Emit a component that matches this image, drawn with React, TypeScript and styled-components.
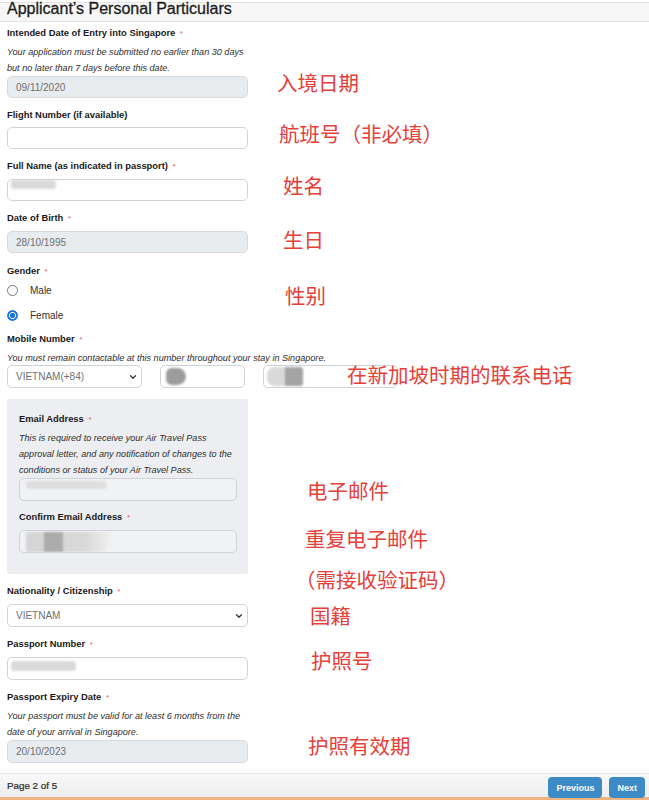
import styled, { createGlobalStyle } from 'styled-components';
import { ChevronDown } from 'lucide-react';

const GlobalStyle = createGlobalStyle`
  html, body {
    margin: 0;
    padding: 0;
    background: #fff;
  }
  body {
    font-family: 'Liberation Sans', Arial, sans-serif;
    color: #212529;
  }
`;

type Note = { text: string; top: number; left: number };

const notes: Note[] = [
  { text: '入境日期', top: 71, left: 277 },
  { text: '航班号（非必填）', top: 122, left: 279 },
  { text: '姓名', top: 174, left: 283 },
  { text: '生日', top: 228, left: 283 },
  { text: '性别', top: 284, left: 285 },
  { text: '在新加坡时期的联系电话', top: 363, left: 347 },
  { text: '电子邮件', top: 479, left: 307 },
  { text: '重复电子邮件', top: 527, left: 305 },
  { text: '（需接收验证码）', top: 568, left: 295 },
  { text: '国籍', top: 604, left: 310 },
  { text: '护照号', top: 649, left: 311 },
  { text: '护照有效期', top: 734, left: 308 },
];

function Req() {
  return <Star>*</Star>;
}

export default function App() {
  return (
    <>
      <GlobalStyle />
      <Page>
        <Header>
          <Title>Applicant’s Personal Particulars</Title>
        </Header>

        <Form>
          <Label $gap={5}>
            Intended Date of Entry into Singapore <Req />
          </Label>
          <Help>
            Your application must be submitted no earlier than 30 days
            <br />
            but no later than 7 days before this date.
          </Help>
          <Field $disabled>09/11/2020</Field>

          <Label>Flight Number (if available)</Label>
          <Field />

          <Label>
            Full Name (as indicated in passport) <Req />
          </Label>
          <Field>
            <Blob $w={45} $h={9} $ml={-5} $mt={-12} $tone="#d9d9d9" />
          </Field>

          <Label>
            Date of Birth <Req />
          </Label>
          <Field $disabled>28/10/1995</Field>

          <Label $gap={12}>
            Gender <Req />
          </Label>
          <Options>
            <Option>
              <Radio />
              Male
            </Option>
            <Option>
              <Radio $checked />
              Female
            </Option>
          </Options>

          <Label $gap={5}>
            Mobile Number <Req />
          </Label>
          <Help $nowrap>You must remain contactable at this number throughout your stay in Singapore.</Help>
          <PhoneRow>
            <Field $w={135} $h={23}>
              VIETNAM(+84)
              <Chevron size={10} strokeWidth={3} />
            </Field>
            <Field $w={85} $h={23}>
              <Blob $w={20} $h={17} $ml={-3} $tone="#9c9c9c" $radius="6px 9px 9px 6px" />
            </Field>
            <Field $w={135} $h={23}>
              <Blob
                $w={36}
                $h={19}
                $ml={-5}
                $tone="linear-gradient(90deg, #d9d9d9 0 50%, #a4a4a4 50% 100%)"
                $radius="8px 3px 3px 8px"
              />
            </Field>
          </PhoneRow>

          <EmailBox>
            <Label $gap={5}>
              Email Address <Req />
            </Label>
            <Help>
              This is required to receive your Air Travel Pass
              <br />
              approval letter, and any notification of changes to the
              <br />
              conditions or status of your Air Travel Pass.
            </Help>
            <Field $muted $h={23}>
              <Blob $w={80} $h={8} $ml={-2} $mt={-10} $tone="#dedede" />
            </Field>

            <Label $gap={10}>
              Confirm Email Address <Req />
            </Label>
            <Field $muted $h={23}>
              <Blob
                $w={84}
                $h={20}
                $ml={-2}
                $tone="linear-gradient(90deg, #d5d5d5 0 22%, #ababab 22% 44%, #d8d8d8 44% 70%, #efefef 100%)"
                $radius="2px 2px 10px 2px"
              />
            </Field>
          </EmailBox>

          <Label>
            Nationality / Citizenship <Req />
          </Label>
          <Field $h={23}>
            VIETNAM
            <Chevron size={10} strokeWidth={3} />
          </Field>

          <Label>
            Passport Number <Req />
          </Label>
          <Field $h={23}>
            <Blob $w={65} $h={10} $ml={-5} $mt={-6} $tone="#dadada" />
          </Field>

          <Label>
            Passport Expiry Date <Req />
          </Label>
          <Help>
            Your passport must be valid for at least 6 months from the
            <br />
            date of your arrival in Singapore.
          </Help>
          <Field $disabled $h={23}>
            20/10/2023
          </Field>
        </Form>

        <Footer>
          <PageInfo>Page 2 of 5</PageInfo>
          <Buttons>
            <NavButton>Previous</NavButton>
            <NavButton>Next</NavButton>
          </Buttons>
        </Footer>

        {notes.map((n) => (
          <Annotation key={n.text} $top={n.top} $left={n.left}>
            {n.text}
          </Annotation>
        ))}
      </Page>
    </>
  );
}

const Page = styled.div`
  position: relative;
  width: 649px;
  height: 800px;
  overflow: hidden;
  display: flex;
  flex-direction: column;
  background: #fff;
`;

const Header = styled.div`
  flex-shrink: 0;
  margin-top: 2px;
  height: 18px;
  padding-left: 7px;
  border-top: 1px solid #e3e3e3;
  border-bottom: 1px solid #e3e3e3;
  background: #f7f7f7;
`;

const Title = styled.h1`
  margin: -3px 0 0;
  font-size: 16px;
  line-height: 18px;
  font-weight: 400;
  color: #1d1d1d;
  -webkit-text-stroke: 0.3px #1d1d1d;
  white-space: nowrap;
`;

const Form = styled.div`
  flex: 1;
  min-height: 0;
  width: 241px;
  padding: 0 7px;
  display: flex;
  flex-direction: column;
`;

const Label = styled.div<{ $gap?: number }>`
  margin-top: ${({ $gap }) => $gap ?? 11}px;
  margin-bottom: 6px;
  font-size: 9.4px;
  line-height: 12px;
  font-weight: 700;
  color: #1a1a1a;
  white-space: nowrap;
`;

const Star = styled.span`
  margin-left: 2px;
  font-size: 8px;
  font-weight: 400;
  color: #e0626b;
`;

const Help = styled.div<{ $nowrap?: boolean }>`
  margin-top: -2px;
  font-size: 9.1px;
  line-height: 16px;
  font-style: italic;
  color: #2e2e2e;
  white-space: ${({ $nowrap }) => ($nowrap ? 'nowrap' : 'normal')};
`;

const Field = styled.div<{ $disabled?: boolean; $muted?: boolean; $w?: number; $h?: number }>`
  box-sizing: border-box;
  flex-shrink: 0;
  width: ${({ $w }) => ($w ? `${$w}px` : '100%')};
  height: ${({ $h }) => $h ?? 22}px;
  padding: 0 8px;
  display: flex;
  align-items: center;
  overflow: hidden;
  border: 1px solid ${({ $disabled }) => ($disabled ? '#d6d9dd' : '#cfd2d6')};
  border-radius: 5px;
  background: ${({ $disabled, $muted }) => ($disabled ? '#e9ecef' : $muted ? '#f1f2f4' : '#fff')};
  font-size: 10px;
  color: #6c7075;
`;

const Chevron = styled(ChevronDown)`
  margin-left: auto;
  margin-right: -5px;
  color: #333;
`;

const Blob = styled.span<{ $w: number; $h: number; $ml?: number; $mt?: number; $tone: string; $radius?: string }>`
  flex-shrink: 0;
  width: ${({ $w }) => $w}px;
  height: ${({ $h }) => $h}px;
  margin-left: ${({ $ml }) => $ml ?? 0}px;
  margin-top: ${({ $mt }) => $mt ?? 0}px;
  border-radius: ${({ $radius }) => $radius ?? '3px'};
  background: ${({ $tone }) => $tone};
  filter: blur(1px);
`;

const Options = styled.div`
  margin-top: -6px;
  display: flex;
  flex-direction: column;
`;

const Option = styled.label`
  height: 25px;
  display: flex;
  align-items: center;
  gap: 12px;
  font-size: 10px;
  color: #333;
`;

const Radio = styled.span<{ $checked?: boolean }>`
  box-sizing: border-box;
  width: 11px;
  height: 11px;
  border-radius: 50%;
  border: 1px solid ${({ $checked }) => ($checked ? '#1a73e8' : '#7a7a7a')};
  background: ${({ $checked }) =>
    $checked ? 'radial-gradient(circle, #1a73e8 0 2.4px, #fff 2.9px 3.2px, #1a73e8 3.7px)' : '#fff'};
`;

const PhoneRow = styled.div`
  margin-top: -1px;
  display: flex;
  gap: 18px;
  width: 400px;
`;

const EmailBox = styled.div`
  margin-top: 11px;
  padding: 9px 11px 21px 12px;
  border-radius: 2px;
  background: #eceef1;
  display: flex;
  flex-direction: column;
`;

const Footer = styled.div`
  flex-shrink: 0;
  box-sizing: border-box;
  height: 27px;
  padding: 0 4px 0 7px;
  display: flex;
  align-items: center;
  justify-content: space-between;
  border-top: 1px solid #e6e6e6;
  border-bottom: 3px solid #efb380;
  background: linear-gradient(#f8f8f8, #eeeeee);
`;

const PageInfo = styled.span`
  font-size: 9.8px;
  color: #2a2a2a;
  -webkit-text-stroke: 0.2px #2a2a2a;
`;

const Buttons = styled.div`
  display: flex;
  gap: 7px;
  align-self: flex-end;
  margin-bottom: -1px;
`;

const NavButton = styled.button`
  height: 21px;
  padding: 0 8px;
  border: none;
  border-radius: 4px;
  background: #3c8bc6;
  color: #fff;
  font-family: 'Liberation Sans', Arial, sans-serif;
  font-size: 9px;
  font-weight: 700;
`;

const Annotation = styled.div<{ $top: number; $left: number }>`
  position: absolute;
  top: ${({ $top }) => $top}px;
  left: ${({ $left }) => $left}px;
  font-family: 'Noto Sans CJK SC', sans-serif;
  font-size: 20.5px;
  line-height: 22px;
  color: #e5403a;
  white-space: nowrap;
  pointer-events: none;
`;
